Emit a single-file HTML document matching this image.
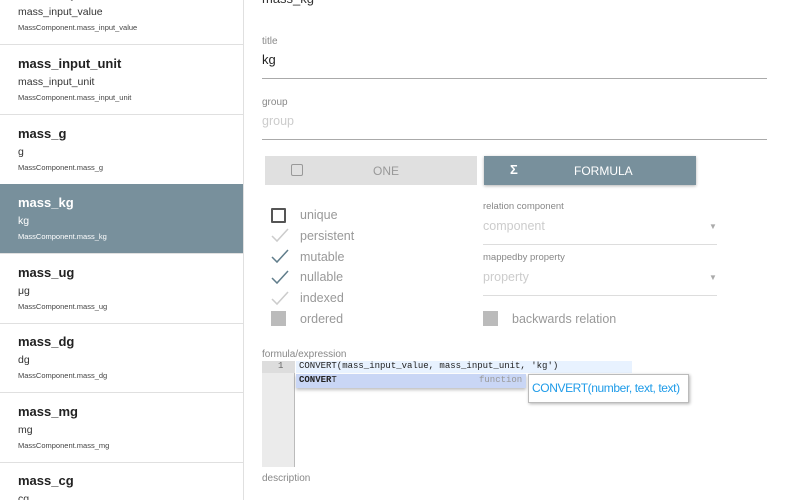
<!DOCTYPE html>
<html><head><meta charset="utf-8"><style>
*{box-sizing:border-box;margin:0;padding:0}
html,body{width:794px;height:500px;overflow:hidden}
body{background:#fff;font-family:"Liberation Sans",sans-serif;position:relative}
.side{position:absolute;left:0;top:0;width:244px;height:500px;border-right:1px solid #e0e0e0;overflow:hidden}
.it{position:absolute;left:0;width:243px;height:70px;border-bottom:1px solid #e0e0e0;padding-left:18px}
.it b{position:absolute;top:11px;font-size:13px;color:#222}
.it .s{position:absolute;top:31px;font-size:10.5px;color:#333}
.it .m{position:absolute;top:48px;font-size:7.5px;color:#444}
.it.sel{background:#78909c}
.it.sel b,.it.sel .s,.it.sel .m{color:#fff}
.a{position:absolute}
.lbl{font-size:10px;color:#888}
.line{height:1px;background:#aaa}
.cb{position:absolute;left:271px;width:15px;height:15px}
.ct{position:absolute;left:300px;font-size:12.5px;color:#999}
.mono{font-family:'Liberation Mono',monospace;font-size:9px}
</style></head><body>
<div class="side">
<div class="it" style="top:-25px"><b>mass_input_value</b><div class="s">mass_input_value</div><div class="m">MassComponent.mass_input_value</div></div>
<div class="it" style="top:45px"><b>mass_input_unit</b><div class="s">mass_input_unit</div><div class="m">MassComponent.mass_input_unit</div></div>
<div class="it" style="top:115px"><b>mass_g</b><div class="s">g</div><div class="m">MassComponent.mass_g</div></div>
<div class="it sel" style="top:184px"><b>mass_kg</b><div class="s">kg</div><div class="m">MassComponent.mass_kg</div></div>
<div class="it" style="top:254px"><b>mass_ug</b><div class="s">μg</div><div class="m">MassComponent.mass_ug</div></div>
<div class="it" style="top:323px"><b>mass_dg</b><div class="s">dg</div><div class="m">MassComponent.mass_dg</div></div>
<div class="it" style="top:393px"><b>mass_mg</b><div class="s">mg</div><div class="m">MassComponent.mass_mg</div></div>
<div class="it" style="top:462px"><b>mass_cg</b><div class="s">cg</div><div class="m">MassComponent.mass_cg</div></div>
</div>

<div class="a" style="left:262px;top:-9px;font-size:13px;color:#333">mass_kg</div>
<div class="a lbl" style="left:262px;top:36px">title</div>
<div class="a" style="left:262px;top:52px;font-size:13px;color:#222">kg</div>
<div class="a line" style="left:262px;top:78px;width:505px"></div>
<div class="a lbl" style="left:262px;top:97px">group</div>
<div class="a" style="left:262px;top:114px;font-size:12.5px;color:#ccc">group</div>
<div class="a line" style="left:262px;top:139px;width:505px"></div>

<div class="a" style="left:265px;top:156px;width:212px;height:29px;background:#e0e0e0"></div>
<div class="a" style="left:291px;top:164px;width:12px;height:12px;border:1.5px solid #999;border-radius:2px"></div>
<div class="a" style="left:373px;top:164px;font-size:12px;color:#999">ONE</div>
<div class="a" style="left:484px;top:156px;width:212px;height:29px;background:#78909c;box-shadow:0 1px 3px rgba(0,0,0,.3)"></div>
<div class="a" style="left:510px;top:162px;font-size:13px;color:#fff;font-weight:bold">Σ</div>
<div class="a" style="left:574px;top:164px;font-size:12px;color:#fff">FORMULA</div>

<div class="cb" style="top:208px;border:2px solid #555;border-radius:1px"></div>
<div class="ct" style="top:208px">unique</div>
<svg class="a" style="left:270px;top:227px" width="20" height="80" viewBox="0 0 20 80">
<path d="M2 9 L7 14 L18 2" fill="none" stroke="#ccc" stroke-width="1.5"/>
<path d="M2 30 L7 35 L18 23" fill="none" stroke="#607d8b" stroke-width="1.5"/>
<path d="M2 51 L7 56 L18 44" fill="none" stroke="#607d8b" stroke-width="1.5"/>
<path d="M2 72 L7 77 L18 65" fill="none" stroke="#ccc" stroke-width="1.5"/>
</svg>
<div class="ct" style="top:229px">persistent</div>
<div class="ct" style="top:250px">mutable</div>
<div class="ct" style="top:270px">nullable</div>
<div class="ct" style="top:291px">indexed</div>
<div class="cb" style="top:311px;background:#bbb"></div>
<div class="ct" style="top:312px">ordered</div>

<div class="a lbl" style="left:483px;top:201px;font-size:9.5px">relation component</div>
<div class="a" style="left:483px;top:219px;font-size:12.5px;color:#ccc">component</div>
<div class="a" style="left:709px;top:222px;font-size:8px;color:#aaa">▼</div>
<div class="a" style="left:483px;top:244px;width:234px;height:1px;background:#ddd"></div>
<div class="a lbl" style="left:483px;top:252px;font-size:9.5px">mappedby property</div>
<div class="a" style="left:483px;top:270px;font-size:12.5px;color:#ccc">property</div>
<div class="a" style="left:709px;top:273px;font-size:8px;color:#aaa">▼</div>
<div class="a" style="left:483px;top:295px;width:234px;height:1px;background:#ddd"></div>
<div class="a" style="left:483px;top:311px;width:15px;height:15px;background:#bbb"></div>
<div class="a" style="left:512px;top:312px;font-size:12.5px;color:#999">backwards relation</div>

<div class="a lbl" style="left:262px;top:349px">formula/expression</div>
<div class="a" style="left:262px;top:361px;width:33px;height:106px;background:#ebebeb;border-right:1px solid #bbb"></div>
<div class="a" style="left:262px;top:361px;width:33px;height:12px;background:#ddd"></div>
<div class="a mono" style="left:278px;top:361px;color:#666">1</div>
<div class="a" style="left:296px;top:361px;width:336px;height:12px;background:#e8f2ff"></div>
<div class="a mono" style="left:299px;top:361px;color:#222;white-space:pre">CONVERT(mass_input_value, mass_input_unit, 'kg')</div>
<div class="a" style="left:296px;top:374px;width:230px;height:14px;background:#c9d6f5;box-shadow:0 2px 3px rgba(0,0,0,.25)"></div>
<div class="a mono" style="left:299px;top:375px;color:#222"><b>CONVER</b>T</div>
<div class="a mono" style="left:479px;top:375px;color:#999">function</div>
<div class="a" style="left:528px;top:374px;width:161px;height:29px;background:#fff;border:1px solid #bbb;box-shadow:1px 1px 3px rgba(0,0,0,.3)"></div>
<div class="a" style="left:532px;top:381px;font-size:12px;letter-spacing:-0.4px;color:#1e9be8">CONVERT(number, text, text)</div>
<div class="a lbl" style="left:262px;top:473px">description</div>
</body></html>
